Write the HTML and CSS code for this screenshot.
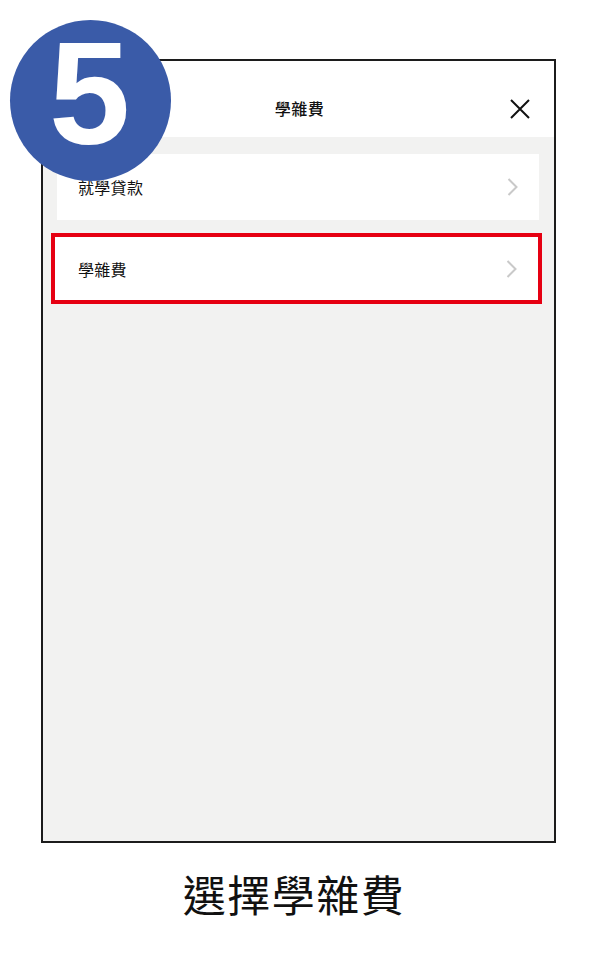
FILE: index.html
```html
<!DOCTYPE html>
<html lang="zh-Hant">
<head>
<meta charset="utf-8">
<link rel="stylesheet" href="styles.css">
</head>
<body>
<div class="page">
  <div class="frame">
    <div class="header">
      <div class="title">學雜費</div>
      <svg class="close" width="20" height="20" viewBox="0 0 20 20"><path d="M1 1 L19 19 M19 1 L1 19" stroke="#111" stroke-width="2" fill="none"/></svg>
    </div>
    <div class="body">
      <div class="card">
        <span class="label">就學貸款</span>
        <svg class="chev" width="11" height="18" viewBox="0 0 11 18"><path d="M1.5 1 L9.5 9 L1.5 17" stroke="#c9c9c9" stroke-width="2" fill="none"/></svg>
      </div>
      <div class="card selected">
        <span class="label">學雜費</span>
        <svg class="chev" width="11" height="18" viewBox="0 0 11 18"><path d="M1.5 1 L9.5 9 L1.5 17" stroke="#c9c9c9" stroke-width="2" fill="none"/></svg>
      </div>
    </div>
  </div>
  <div class="caption">選擇學雜費</div>
  <div class="badge">5</div>
</div>
</body>
</html>
```
FILE: styles.css
```css
* { box-sizing: border-box; }
html, body { margin: 0; padding: 0; background: #fff; }
body { font-family: "Noto Sans CJK TC", "Noto Sans", sans-serif; color: #111; }
.page { position: relative; width: 596px; height: 959px; padding-top: 59px; }
.frame {
  margin-left: 41px;
  width: 515px;
  height: 784px;
  border: 2px solid #1c1c1c;
  display: flex;
  flex-direction: column;
  background: #f2f2f1;
}
.header {
  height: 76px;
  background: #fff;
  display: flex;
  align-items: center;
  justify-content: center;
  position: relative;
  flex-shrink: 0;
}
.title { font-size: 16px; font-weight: 500; letter-spacing: 0.5px; margin-left: 2px; margin-top: 17px; }
.close { position: absolute; right: 24px; top: 38px; }
.body { flex: 1; padding-top: 17px; display: flex; flex-direction: column; }
.card {
  background: #fff;
  height: 66px;
  margin: 0 15px 0 14px;
  display: flex;
  align-items: center;
  justify-content: space-between;
  padding: 0 21px;
}
.label { font-size: 16px; letter-spacing: 0.3px; }
.card.selected {
  margin: 13px 12px 0 8px;
  height: 71px;
  border: 4px solid #e60012;
  padding: 0 21px 0 23px;
}
.caption {
  text-align: center;
  font-size: 43px;
  line-height: 1;
  margin-top: 29px;
  padding-right: 8px;
  letter-spacing: 1.5px;
  color: #111;
}
.badge {
  position: absolute;
  left: 10px;
  top: 20px;
  width: 161px;
  height: 161px;
  border-radius: 50%;
  background: #3a5ba8;
  color: #fff;
  font-family: "Liberation Sans", Arial, sans-serif;
  font-weight: 700;
  font-size: 146px;
  line-height: 147px;
  text-align: center;
  padding-right: 2px;
}
```
